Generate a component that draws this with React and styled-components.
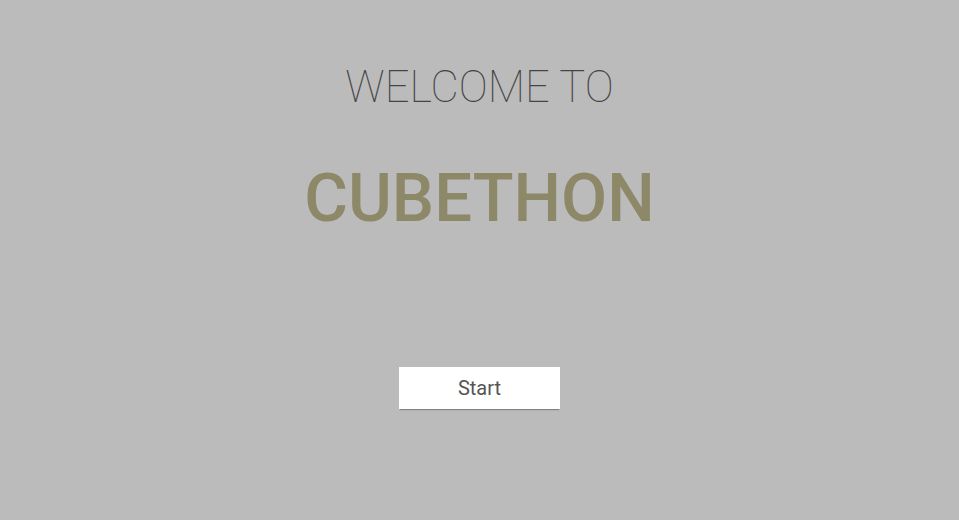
import styled, { createGlobalStyle } from "styled-components";

const GlobalStyle = createGlobalStyle`
  html, body {
    margin: 0;
    padding: 0;
    height: 100%;
    background: #bbbbbb;
    font-family: Roboto, "Liberation Sans", sans-serif;
  }
  #root {
    min-height: 100%;
  }
`;

export default function App() {
  return (
    <>
      <GlobalStyle />
      <Page>
        <Welcome>WELCOME TO</Welcome>
        <Title>CUBETHON</Title>
        <StartButton type="button">Start</StartButton>
      </Page>
    </>
  );
}

const Page = styled.div`
  display: flex;
  flex-direction: column;
  align-items: center;
  padding-top: 60px;
`;

const Welcome = styled.h2`
  margin: 0;
  font-size: 43.5px;
  font-weight: 100;
  line-height: 56px;
  color: #444;
`;

const Title = styled.h1`
  margin: 41px 0 0;
  font-size: 67px;
  font-weight: 500;
  line-height: 82px;
  color: #8d8868;
`;

const StartButton = styled.button`
  margin-top: 128px;
  width: 161px;
  height: 42px;
  border: none;
  border-radius: 0;
  background: #fff;
  box-shadow: 0 2px 1px -1px rgba(0, 0, 0, 0.3);
  font-family: Roboto, "Liberation Sans", sans-serif;
  font-size: 20px;
  color: #555;
  cursor: pointer;
`;
